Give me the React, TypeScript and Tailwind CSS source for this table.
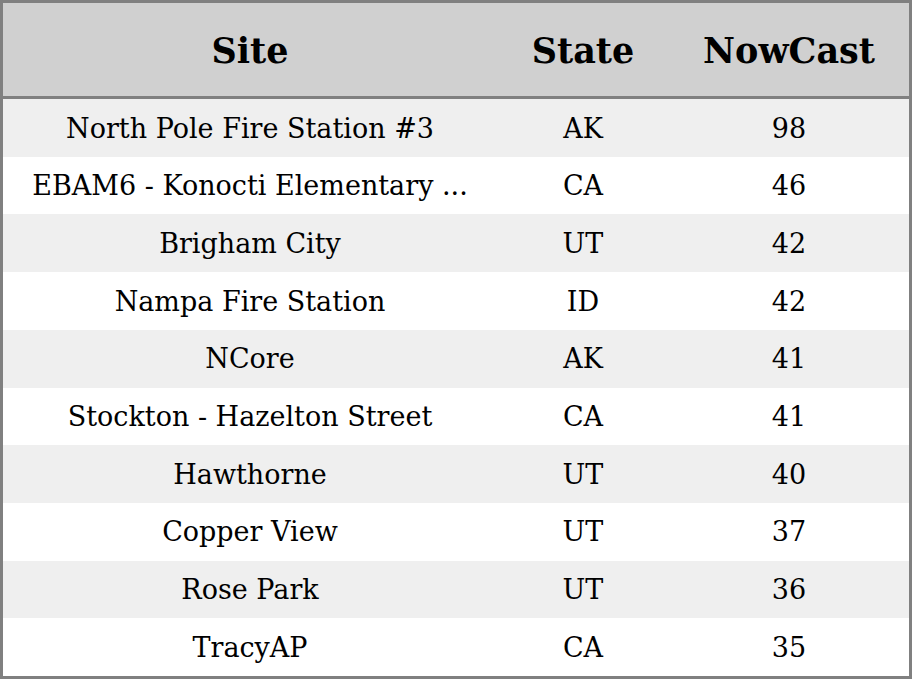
const rows: [string, string, number][] = [
  ["North Pole Fire Station #3", "AK", 98],
  ["EBAM6 - Konocti Elementary ...", "CA", 46],
  ["Brigham City", "UT", 42],
  ["Nampa Fire Station", "ID", 42],
  ["NCore", "AK", 41],
  ["Stockton - Hazelton Street", "CA", 41],
  ["Hawthorne", "UT", 40],
  ["Copper View", "UT", 37],
  ["Rose Park", "UT", 36],
  ["TracyAP", "CA", 35],
];

export default function App() {
  return (
    <div className="w-[912px] h-[679px] bg-white font-['DejaVu_Serif',serif] text-black">
      <div className="flex h-full flex-col border-[3px] border-[#808080]">
        <div className="grid h-[96px] shrink-0 grid-cols-[494px_172px_1fr] items-center border-b-[3px] border-[#808080] bg-[#d0d0d0] pt-[3px] text-[35px] font-bold">
          <div className="text-center">Site</div>
          <div className="text-center">State</div>
          <div className="text-center">NowCast</div>
        </div>
        <div className="grid flex-1 grid-rows-10">
          {rows.map(([site, state, value], i) => (
            <div
              key={site}
              className={
                "grid grid-cols-[494px_172px_1fr] items-center pt-[2px] text-[27px] " +
                (i % 2 === 0 ? "bg-[#efefef]" : "bg-white")
              }
            >
              <div className="whitespace-nowrap text-center">{site}</div>
              <div className="text-center">{state}</div>
              <div className="text-center">{value}</div>
            </div>
          ))}
        </div>
      </div>
    </div>
  );
}
